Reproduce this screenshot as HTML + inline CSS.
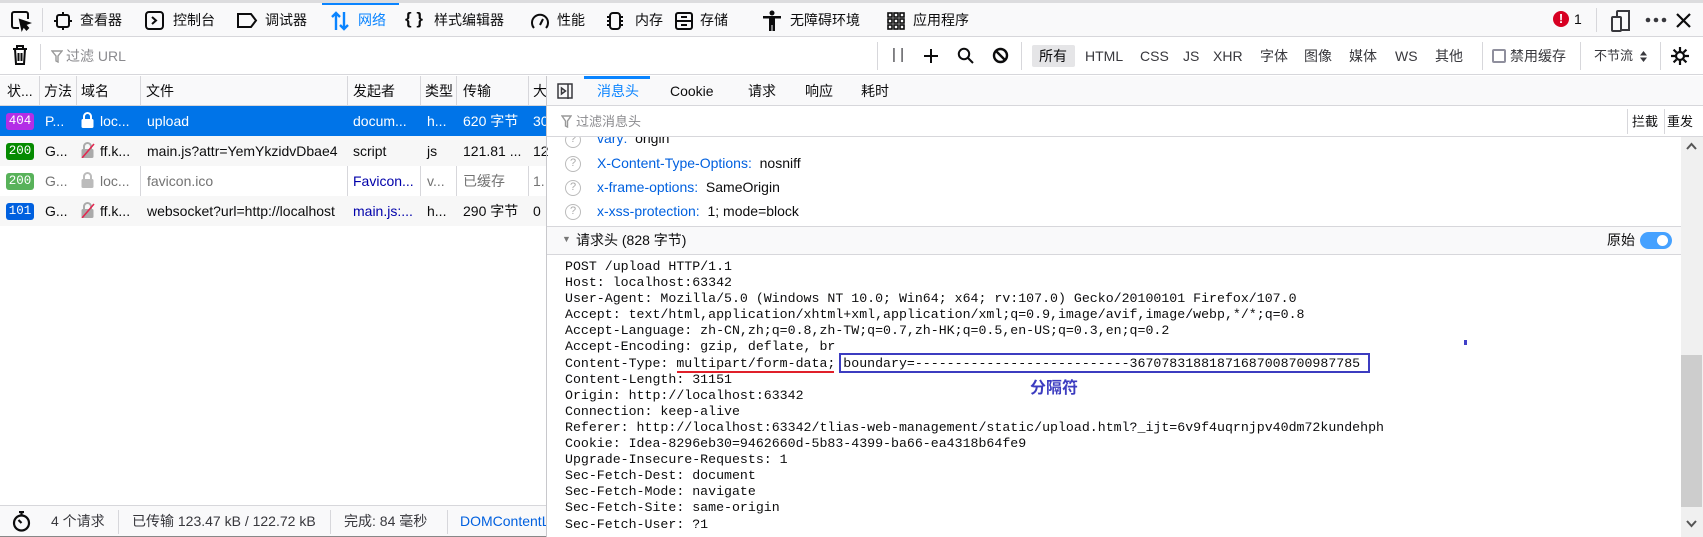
<!DOCTYPE html>
<html><head><meta charset="utf-8"><style>
*{box-sizing:border-box;margin:0;padding:0}
body{width:1703px;height:537px;overflow:hidden;background:#fff;font-family:"Liberation Sans","Noto Sans CJK SC",sans-serif;font-size:14px;color:#0c0c0d;position:relative}
.a{position:absolute;white-space:nowrap}
.vs{position:absolute;width:1px;background:#d7d7db}
.mono{font-family:"Liberation Mono","Noto Sans CJK SC",monospace}
.t{line-height:20px}
pre.a{white-space:pre}
</style></head><body>
<!-- top bar -->
<div class="a" style="left:0;top:0;width:1703px;height:3px;background:#dcdcde"></div>
<div class="a" style="left:0;top:3px;width:1703px;height:34px;background:#f9f9fa;border-bottom:1px solid #d7d7db"></div>
<div class="a" style="left:322px;top:3px;width:77px;height:2px;background:#0a84ff"></div>
<svg class="a" style="left:10px;top:10px" width="22" height="22" viewBox="0 0 22 22" fill="none" stroke="#0c0c0d" stroke-width="2"><path d="M9 18H4a2 2 0 0 1-2-2V4a2 2 0 0 1 2-2h12a2 2 0 0 1 2 2v5"/><path d="M10 10l9 3-4 1.5 3 3.5-1.5 1.5-3-3.5L12 19z" fill="#0c0c0d"/></svg>
<div class="vs" style="left:42px;top:8px;height:24px"></div>
<svg class="a" style="left:54px;top:12px" width="18" height="18" viewBox="0 0 18 18" fill="none" stroke="#0c0c0d" stroke-width="2"><rect x="3" y="3" width="12" height="12" rx="2"/><path d="M9 0v3M9 15v3M0 9h3M15 9h3"/></svg>
<div class="a t" style="left:80px;top:10px">查看器</div>
<svg class="a" style="left:145px;top:11px" width="19" height="19" viewBox="0 0 19 19" fill="none" stroke="#0c0c0d" stroke-width="2"><rect x="1" y="1" width="17" height="17" rx="3"/><path d="M7 6l4 3.5L7 13"/></svg>
<div class="a t" style="left:173px;top:10px">控制台</div>
<svg class="a" style="left:236px;top:12px" width="22" height="17" viewBox="0 0 22 17" fill="none" stroke="#0c0c0d" stroke-width="2"><path d="M2 2h13l5 6.5-5 6.5H2z"/></svg>
<div class="a t" style="left:265px;top:10px">调试器</div>
<svg class="a" style="left:330px;top:11px" width="20" height="20" viewBox="0 0 20 20" fill="none" stroke="#0a84ff" stroke-width="2.4"><path d="M6 19V2M2 6l4-4 4 4M14 1v17M10 14l4 4 4-4"/></svg>
<div class="a t" style="left:358px;top:10px;color:#0a84ff">网络</div>
<div class="a t" style="left:405px;top:9px;font-weight:bold;font-size:17px">{ }</div>
<div class="a t" style="left:434px;top:10px">样式编辑器</div>
<svg class="a" style="left:530px;top:11px" width="20" height="20" viewBox="0 0 20 20" fill="none" stroke="#0c0c0d" stroke-width="2"><path d="M4 17A8 8 0 1 1 16 17"/><path d="M10 14l3-6"/></svg>
<div class="a t" style="left:557px;top:10px">性能</div>
<svg class="a" style="left:606px;top:11px" width="18" height="20" viewBox="0 0 18 20" fill="none" stroke="#0c0c0d" stroke-width="2"><rect x="4" y="2" width="10" height="16" rx="3"/><path d="M1 6h3M1 10h3M1 14h3M14 6h3M14 10h3M14 14h3"/></svg>
<div class="a t" style="left:635px;top:10px">内存</div>
<svg class="a" style="left:674px;top:11px" width="20" height="20" viewBox="0 0 20 20" fill="none" stroke="#0c0c0d" stroke-width="2"><rect x="2" y="2" width="16" height="16" rx="2"/><path d="M2 10h16M7 6h6M7 14h6"/></svg>
<div class="a t" style="left:700px;top:10px">存储</div>
<svg class="a" style="left:762px;top:10px" width="20" height="22" viewBox="0 0 20 22" fill="#0c0c0d"><circle cx="10" cy="3" r="2.5"/><path d="M1 6h18v2.5h-6V21h-2.5v-6h-1v6H7V8.5H1z"/></svg>
<div class="a t" style="left:790px;top:10px">无障碍环境</div>
<svg class="a" style="left:887px;top:12px" width="18" height="18" viewBox="0 0 18 18" fill="none" stroke="#0c0c0d" stroke-width="1.6"><rect x="1" y="1" width="4" height="4"/><rect x="7" y="1" width="4" height="4"/><rect x="13" y="1" width="4" height="4"/><rect x="1" y="7" width="4" height="4"/><rect x="7" y="7" width="4" height="4"/><rect x="13" y="7" width="4" height="4"/><rect x="1" y="13" width="4" height="4"/><rect x="7" y="13" width="4" height="4"/><rect x="13" y="13" width="4" height="4"/></svg>
<div class="a t" style="left:913px;top:10px">应用程序</div>
<div class="a" style="left:1553px;top:11px;width:16px;height:16px;border-radius:50%;background:#d70022;color:#fff;font-weight:bold;font-size:13px;text-align:center;line-height:16px">!</div>
<div class="a t" style="left:1574px;top:9px">1</div>
<div class="vs" style="left:1596px;top:8px;height:24px"></div>
<svg class="a" style="left:1611px;top:10px" width="20" height="22" viewBox="0 0 20 22" fill="none" stroke="#38383d" stroke-width="2"><rect x="1" y="7" width="9" height="14" rx="1"/><path d="M6 7V2a1 1 0 0 1 1-1h11v19h-8"/></svg>
<svg class="a" style="left:1645px;top:17px" width="22" height="6" viewBox="0 0 22 6" fill="#38383d"><circle cx="3" cy="3" r="2.3"/><circle cx="11" cy="3" r="2.3"/><circle cx="19" cy="3" r="2.3"/></svg>
<svg class="a" style="left:1676px;top:13px" width="15" height="15" viewBox="0 0 15 15" stroke="#0c0c0d" stroke-width="2.2"><path d="M1 1l13 13M14 1L1 14"/></svg>

<!-- toolbar 2 -->
<div class="a" style="left:0;top:38px;width:1703px;height:37px;background:#fff;border-bottom:1px solid #d7d7db"></div>
<svg class="a" style="left:12px;top:45px" width="16" height="20" viewBox="0 0 16 20" fill="none" stroke="#0c0c0d" stroke-width="2"><path d="M1 4h14M5 4V1h6v3M3 4l1 15h8l1-15M6.5 8v8M9.5 8v8"/></svg>
<div class="vs" style="left:40px;top:44px;height:26px"></div>
<svg class="a" style="left:51px;top:50px" width="12" height="13" viewBox="0 0 12 13" fill="none" stroke="#999" stroke-width="1.4"><path d="M1 1h10L7 6v6L5 11V6z"/></svg>
<div class="a t" style="left:66px;top:46px;color:#8a8a8e">过滤 URL</div>
<div class="vs" style="left:877px;top:42px;height:28px"></div>
<div class="a t" style="left:892px;top:45px;color:#38383d;font-size:15px">| |</div>
<svg class="a" style="left:923px;top:48px" width="16" height="16" viewBox="0 0 16 16" stroke="#0c0c0d" stroke-width="2"><path d="M8 1v14M1 8h14"/></svg>
<svg class="a" style="left:957px;top:47px" width="17" height="17" viewBox="0 0 17 17" fill="none" stroke="#0c0c0d" stroke-width="2"><circle cx="7" cy="7" r="5.2"/><path d="M11 11l5 5"/></svg>
<svg class="a" style="left:992px;top:47px" width="17" height="17" viewBox="0 0 17 17" fill="none" stroke="#0c0c0d" stroke-width="2.4"><circle cx="8.5" cy="8.5" r="6.5"/><path d="M4 4l9 9"/></svg>
<div class="vs" style="left:1021px;top:42px;height:28px"></div>
<div class="a" style="left:1032px;top:45px;width:43px;height:22px;background:#e5e5e7;border-radius:2px"></div>
<div class="a t" style="left:1039px;top:46px">所有</div>
<div class="a t" style="left:1085px;top:46px;color:#38383d">HTML</div>
<div class="a t" style="left:1140px;top:46px;color:#38383d">CSS</div>
<div class="a t" style="left:1183px;top:46px;color:#38383d">JS</div>
<div class="a t" style="left:1213px;top:46px;color:#38383d">XHR</div>
<div class="a t" style="left:1260px;top:46px;color:#38383d">字体</div>
<div class="a t" style="left:1304px;top:46px;color:#38383d">图像</div>
<div class="a t" style="left:1349px;top:46px;color:#38383d">媒体</div>
<div class="a t" style="left:1395px;top:46px;color:#38383d">WS</div>
<div class="a t" style="left:1435px;top:46px;color:#38383d">其他</div>
<div class="vs" style="left:1482px;top:42px;height:28px"></div>
<div class="a" style="left:1492px;top:49px;width:14px;height:14px;border:2px solid #8f8f9d;border-radius:2px"></div>
<div class="a t" style="left:1510px;top:46px;color:#38383d">禁用缓存</div>
<div class="vs" style="left:1580px;top:42px;height:28px"></div>
<div class="a t" style="left:1594px;top:46px;color:#38383d;font-size:13px">不节流</div>
<svg class="a" style="left:1640px;top:51px" width="7" height="11" viewBox="0 0 7 11" fill="#38383d"><path d="M0 4.5L3.5 0 7 4.5zM0 6.5L3.5 11 7 6.5z"/></svg>
<div class="vs" style="left:1660px;top:42px;height:28px"></div>
<svg class="a" style="left:1670px;top:46px" width="20" height="20" viewBox="0 0 20 20" fill="none" stroke="#0c0c0d" stroke-width="2.2"><circle cx="10" cy="10" r="4"/><path d="M10 1v4M10 15v4M1 10h4M15 10h4M3.6 3.6l2.8 2.8M13.6 13.6l2.8 2.8M3.6 16.4l2.8-2.8M13.6 6.4l2.8-2.8"/></svg>

<!-- left panel -->
<div class="a" style="left:0;top:76px;width:546px;height:30px;background:#f9f9fa;border-bottom:1px solid #d7d7db"></div>
<div class="vs" style="left:39px;top:76px;height:30px"></div>
<div class="vs" style="left:76px;top:76px;height:30px"></div>
<div class="vs" style="left:140px;top:76px;height:120px"></div>
<div class="vs" style="left:347px;top:76px;height:120px"></div>
<div class="vs" style="left:420px;top:76px;height:120px"></div>
<div class="vs" style="left:456px;top:76px;height:120px"></div>
<div class="vs" style="left:528px;top:76px;height:120px"></div>
<div class="a t" style="left:7px;top:81px">状...</div>
<div class="a t" style="left:44px;top:81px">方法</div>
<div class="a t" style="left:81px;top:81px">域名</div>
<div class="a t" style="left:146px;top:81px">文件</div>
<div class="a t" style="left:353px;top:81px">发起者</div>
<div class="a t" style="left:425px;top:81px">类型</div>
<div class="a t" style="left:463px;top:81px">传输</div>
<div class="a t" style="left:533px;top:81px">大</div>

<div class="a" style="left:0;top:106px;width:546px;height:30px;background:#0074e8"></div>
<div class="a" style="left:0;top:136px;width:546px;height:30px;background:#f7f7f7"></div>
<div class="a" style="left:0;top:196px;width:546px;height:30px;background:#f7f7f7"></div>
<!-- row 1 -->
<div class="a mono" style="left:6px;top:113px;width:28px;height:17px;background:#b32ee6;color:#fff;font-size:12.5px;line-height:17px;text-align:center;border-radius:3px">404</div>
<div class="a t" style="left:45px;top:111px;color:#fff">P...</div>
<svg class="a" style="left:81px;top:112px" width="13" height="16" viewBox="0 0 13 16"><path d="M3 7V4.5a3.5 3.5 0 0 1 7 0V7" fill="none" stroke="#fff" stroke-width="2"/><rect x="0.5" y="7" width="12" height="9" rx="1.5" fill="#fff"/></svg>
<div class="a t" style="left:100px;top:111px;color:#fff">loc...</div>
<div class="a t" style="left:147px;top:111px;color:#fff">upload</div>
<div class="a t" style="left:353px;top:111px;color:#fff">docum...</div>
<div class="a t" style="left:427px;top:111px;color:#fff">h...</div>
<div class="a t" style="left:463px;top:111px;color:#fff">620 字节</div>
<div class="a t" style="left:533px;top:111px;color:#fff">30</div>
<!-- row 2 -->
<div class="a mono" style="left:6px;top:143px;width:28px;height:17px;background:#058b00;color:#fff;font-size:12.5px;line-height:17px;text-align:center;border-radius:3px">200</div>
<div class="a t" style="left:45px;top:141px">G...</div>
<svg class="a" style="left:81px;top:142px" width="14" height="16" viewBox="0 0 14 16"><path d="M3 7V4.5a3.5 3.5 0 0 1 7 0V7" fill="none" stroke="#aaa" stroke-width="2"/><rect x="0.5" y="7" width="12" height="9" rx="1.5" fill="#aaa"/><path d="M1 16L13 2" stroke="#e22850" stroke-width="1.6"/></svg>
<div class="a t" style="left:100px;top:141px">ff.k...</div>
<div class="a t" style="left:147px;top:141px;width:199px;overflow:hidden">main.js?attr=YemYkzidvDbae4</div>
<div class="a t" style="left:353px;top:141px">script</div>
<div class="a t" style="left:427px;top:141px">js</div>
<div class="a t" style="left:463px;top:141px">121.81 ...</div>
<div class="a t" style="left:533px;top:141px">12</div>
<!-- row 3 -->
<div class="a mono" style="left:6px;top:173px;width:28px;height:17px;background:#58b25a;color:#fff;font-size:12.5px;line-height:17px;text-align:center;border-radius:3px">200</div>
<div class="a t" style="left:45px;top:171px;color:#737373">G...</div>
<svg class="a" style="left:81px;top:172px" width="13" height="16" viewBox="0 0 13 16"><path d="M3 7V4.5a3.5 3.5 0 0 1 7 0V7" fill="none" stroke="#bbb" stroke-width="2"/><rect x="0.5" y="7" width="12" height="9" rx="1.5" fill="#bbb"/></svg>
<div class="a t" style="left:100px;top:171px;color:#737373">loc...</div>
<div class="a t" style="left:147px;top:171px;color:#737373">favicon.ico</div>
<div class="a t" style="left:353px;top:171px;color:#0000aa">Favicon...</div>
<div class="a t" style="left:427px;top:171px;color:#737373">v...</div>
<div class="a t" style="left:463px;top:171px;color:#737373">已缓存</div>
<div class="a t" style="left:533px;top:171px;color:#737373">1.</div>
<!-- row 4 -->
<div class="a mono" style="left:6px;top:203px;width:28px;height:17px;background:#0060df;color:#fff;font-size:12.5px;line-height:17px;text-align:center;border-radius:3px">101</div>
<div class="a t" style="left:45px;top:201px">G...</div>
<svg class="a" style="left:81px;top:202px" width="14" height="16" viewBox="0 0 14 16"><path d="M3 7V4.5a3.5 3.5 0 0 1 7 0V7" fill="none" stroke="#aaa" stroke-width="2"/><rect x="0.5" y="7" width="12" height="9" rx="1.5" fill="#aaa"/><path d="M1 16L13 2" stroke="#e22850" stroke-width="1.6"/></svg>
<div class="a t" style="left:100px;top:201px">ff.k...</div>
<div class="a t" style="left:147px;top:201px;width:199px;overflow:hidden">websocket?url=http://localhost</div>
<div class="a t" style="left:353px;top:201px;color:#0000aa">main.js:...</div>
<div class="a t" style="left:427px;top:201px">h...</div>
<div class="a t" style="left:463px;top:201px">290 字节</div>
<div class="a t" style="left:533px;top:201px">0</div>

<!-- footer -->
<div class="a" style="left:0;top:505px;width:546px;height:32px;background:#f9f9fa;border-top:1px solid #d7d7db;border-bottom:1px solid #888"></div>
<svg class="a" style="left:12px;top:511px" width="19" height="21" viewBox="0 0 19 21" fill="none" stroke="#0c0c0d" stroke-width="2.2"><circle cx="9.5" cy="12" r="7.5"/><path d="M9.5 12l-3-3M7 1h5M9.5 1v3"/></svg>
<div class="a t" style="left:51px;top:511px;color:#38383d">4 个请求</div>
<div class="vs" style="left:118px;top:510px;height:24px"></div>
<div class="a t" style="left:132px;top:511px;color:#38383d">已传输 123.47 kB / 122.72 kB</div>
<div class="vs" style="left:330px;top:510px;height:24px"></div>
<div class="a t" style="left:344px;top:511px;color:#38383d">完成: 84 毫秒</div>
<div class="vs" style="left:447px;top:510px;height:24px"></div>
<div class="a t" style="left:460px;top:511px;color:#0060df;width:86px;overflow:hidden">DOMContentLoaded</div>

<!-- splitter -->
<div class="a" style="left:546px;top:76px;width:1px;height:461px;background:#c8c8cc"></div>

<!-- right panel -->
<div class="a" style="left:547px;top:76px;width:1156px;height:30px;background:#f9f9fa;border-bottom:1px solid #d7d7db"></div>
<div class="a" style="left:584px;top:76px;width:66px;height:3px;background:#0a84ff"></div>
<svg class="a" style="left:557px;top:83px" width="16" height="16" viewBox="0 0 16 16" fill="none" stroke="#38383d" stroke-width="1.5"><rect x="1" y="1" width="14" height="14"/><path d="M11 1v15M4.5 5l4 3-4 3z"/></svg>
<div class="a t" style="left:597px;top:81px;color:#0a84ff">消息头</div>
<div class="a t" style="left:670px;top:81px">Cookie</div>
<div class="a t" style="left:748px;top:81px">请求</div>
<div class="a t" style="left:805px;top:81px">响应</div>
<div class="a t" style="left:861px;top:81px">耗时</div>

<div class="a" style="left:547px;top:106px;width:1156px;height:31px;background:#fff;border-bottom:1px solid #d7d7db"></div>
<svg class="a" style="left:561px;top:115px" width="11" height="13" viewBox="0 0 11 13" fill="none" stroke="#999" stroke-width="1.4"><path d="M1 1h9L6.5 6v6L4.5 11V6z"/></svg>
<div class="a t" style="left:576px;top:112px;color:#8a8a8e;font-size:13px">过滤消息头</div>
<div class="vs" style="left:1627px;top:109px;height:25px"></div>
<div class="a t" style="left:1632px;top:112px;font-size:13px">拦截</div>
<div class="vs" style="left:1664px;top:109px;height:25px"></div>
<div class="a t" style="left:1667px;top:112px;font-size:13px">重发</div>

<!-- scrollbar -->
<div class="a" style="left:1681px;top:137px;width:22px;height:400px;background:#f0f0f0"></div>
<div class="a" style="left:1681px;top:355px;width:21px;height:152px;background:#cdcdcd"></div>
<svg class="a" style="left:1686px;top:142px" width="11" height="8" viewBox="0 0 11 8" fill="none" stroke="#555" stroke-width="2"><path d="M1 7l4.5-5L10 7"/></svg>
<svg class="a" style="left:1686px;top:520px" width="11" height="8" viewBox="0 0 11 8" fill="none" stroke="#555" stroke-width="2"><path d="M1 1l4.5 5L10 1"/></svg>

<!-- response headers (scrolled) -->
<div style="position:absolute;left:547px;top:137px;width:1134px;height:400px;overflow:hidden">
 <div class="a" style="left:18px;top:-5px;width:16px;height:16px;border:1.5px solid #bbb;border-radius:50%;font-size:11px;color:#aaa;text-align:center;line-height:13px">?</div>
 <div class="a" style="left:50px;top:-7px;font-size:14px"><span style="color:#0060df">vary:</span>&nbsp; origin</div>
 <div class="a" style="left:18px;top:19px;width:16px;height:16px;border:1.5px solid #bbb;border-radius:50%;font-size:11px;color:#aaa;text-align:center;line-height:13px">?</div>
 <div class="a" style="left:50px;top:18px;font-size:14px"><span style="color:#0060df">X-Content-Type-Options:</span>&nbsp; nosniff</div>
 <div class="a" style="left:18px;top:43px;width:16px;height:16px;border:1.5px solid #bbb;border-radius:50%;font-size:11px;color:#aaa;text-align:center;line-height:13px">?</div>
 <div class="a" style="left:50px;top:42px;font-size:14px"><span style="color:#0060df">x-frame-options:</span>&nbsp; SameOrigin</div>
 <div class="a" style="left:18px;top:67px;width:16px;height:16px;border:1.5px solid #bbb;border-radius:50%;font-size:11px;color:#aaa;text-align:center;line-height:13px">?</div>
 <div class="a" style="left:50px;top:66px;font-size:14px"><span style="color:#0060df">x-xss-protection:</span>&nbsp; 1; mode=block</div>
 <div class="a" style="left:0;top:89px;width:1134px;height:29px;background:#f9f9fa;border-top:1px solid #d7d7db;border-bottom:1px solid #d7d7db"></div>
 <div class="a" style="left:15px;top:97px;font-size:9px;color:#777">&#9660;</div>
 <div class="a t" style="left:29px;top:93px">请求头 (828 字节)</div>
 <div class="a t" style="left:1060px;top:93px">原始</div>
 <div class="a" style="left:1093px;top:95px;width:32px;height:17px;background:#45a1ff;border-radius:9px"></div>
 <div class="a" style="left:1110px;top:98px;width:11px;height:11px;background:#fff;border-radius:50%"></div>
 <pre class="a mono" style="left:18px;top:122px;font-size:13.25px;line-height:16.1px;color:#0c0c0d">POST /upload HTTP/1.1
Host: localhost:63342
User-Agent: Mozilla/5.0 (Windows NT 10.0; Win64; x64; rv:107.0) Gecko/20100101 Firefox/107.0
Accept: text/html,application/xhtml+xml,application/xml;q=0.9,image/avif,image/webp,*/*;q=0.8
Accept-Language: zh-CN,zh;q=0.8,zh-TW;q=0.7,zh-HK;q=0.5,en-US;q=0.3,en;q=0.2
Accept-Encoding: gzip, deflate, br
Content-Type: multipart/form-data; boundary=---------------------------36707831881871687008700987785
Content-Length: 31151
Origin: http://localhost:63342
Connection: keep-alive
Referer: http://localhost:63342/tlias-web-management/static/upload.html?_ijt=6v9f4uqrnjpv40dm72kundehph
Cookie: Idea-8296eb30=9462660d-5b83-4399-ba66-ea4318b64fe9
Upgrade-Insecure-Requests: 1
Sec-Fetch-Dest: document
Sec-Fetch-Mode: navigate
Sec-Fetch-Site: same-origin
Sec-Fetch-User: ?1</pre>
 <div class="a" style="left:917px;top:203px;width:3px;height:5px;background:#4040c8"></div>
</div>
<!-- annotations -->
<div class="a" style="left:677px;top:371px;width:157px;height:2px;background:#e0202a"></div>
<div class="a" style="left:839px;top:353px;width:531px;height:20px;border:2px solid #3c3cc0"></div>
<div class="a" style="left:1030px;top:374px;font-size:16px;font-weight:bold;color:#3c3cc0">分隔符</div>
</body></html>
